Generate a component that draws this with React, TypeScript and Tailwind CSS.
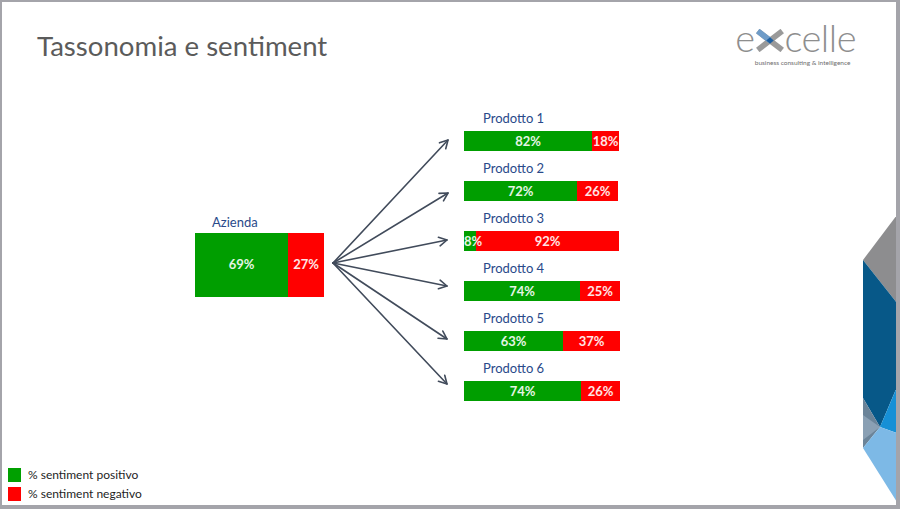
import React from 'react';

// Data for the product bars (widths measured from the slide)
const products = [
  { name: 'Prodotto 1', pos: '82%', neg: '18%', gw: 128, rw: 27, narrow: false },
  { name: 'Prodotto 2', pos: '72%', neg: '26%', gw: 113, rw: 41, narrow: false },
  { name: 'Prodotto 3', pos: '8%', neg: '92%', gw: 12, rw: 143, narrow: true },
  { name: 'Prodotto 4', pos: '74%', neg: '25%', gw: 116, rw: 40, narrow: false },
  { name: 'Prodotto 5', pos: '63%', neg: '37%', gw: 99, rw: 57, narrow: false },
  { name: 'Prodotto 6', pos: '74%', neg: '26%', gw: 117, rw: 39, narrow: false },
];

const origin = { x: 9, y: 153 };
const tips = [
  { x: 124, y: 30 },
  { x: 124, y: 83 },
  { x: 123, y: 130 },
  { x: 123, y: 176 },
  { x: 123, y: 229 },
  { x: 123, y: 274 },
];

const headPoints = (x1: number, y1: number, x2: number, y2: number) => {
  const a = Math.atan2(y2 - y1, x2 - x1);
  const len = 9;
  const s = 0.5;
  const p1 = `${x2 - len * Math.cos(a - s)},${y2 - len * Math.sin(a - s)}`;
  const p2 = `${x2 - len * Math.cos(a + s)},${y2 - len * Math.sin(a + s)}`;
  return `${p1} ${x2},${y2} ${p2}`;
};

const Arrows: React.FC = () => (
  <svg width={140} height={290} className="shrink-0" viewBox="0 0 140 290">
    {tips.map((t, i) => (
      <g key={i} stroke="#414b5b" strokeWidth={1.6} fill="none" strokeLinecap="round" strokeLinejoin="round">
        <line x1={origin.x} y1={origin.y} x2={t.x} y2={t.y} />
        <polyline points={headPoints(origin.x, origin.y, t.x, t.y)} />
      </g>
    ))}
  </svg>
);

const Logo: React.FC = () => (
  <div className="mt-[15px] mr-[40px] flex flex-col items-center">
    <div className="flex items-end h-[40px] text-[38px] leading-[40px] tracking-[-0.5px] font-light text-[#8e8e8e]">
      <span>e</span>
      <svg width={32} height={23} viewBox="0 0 34 24" className="mb-[5px] mx-[-1px]">
        <line x1={4} y1={22} x2={30} y2={2} stroke="#9a9a9a" strokeWidth={6} />
        <line x1={4} y1={2} x2={30} y2={22} stroke="#9a9a9a" strokeWidth={6} />
        <line x1={4} y1={2} x2={17} y2={12} stroke="#6f9cc8" strokeWidth={6} />
        <polygon points="13,12 17,8.5 21,12 17,15.5" fill="#1f5f9f" />
      </svg>
      <span>celle</span>
    </div>
    <div className="mt-[2px] text-[6.5px] leading-[7px] text-[#6e6e6e] ml-[14px]">business consulting &amp; intelligence</div>
  </div>
);

const Decoration: React.FC = () => (
  <svg width={34} height={295} viewBox="0 0 34 295" className="absolute right-0 top-[208px]">
    <polygon points="35,5 1,50 35,93" fill="#8d8d8f" />
    <polygon points="1,50 35,93 35,177 18,217 1,188" fill="#075888" />
    <polygon points="35,177 18,217 35,223" fill="#1690d6" />
    <polygon points="1,188 18,217 1,238" fill="#6b8499" />
    <polygon points="1,205 18,217 1,230" fill="#8aa0b4" />
    <polygon points="1,238 18,217 35,223 35,292" fill="#7db9e6" />
  </svg>
);

export default function App() {
  return (
    <div className="w-[900px] h-[509px] bg-[#a4a4aa] pt-[2px] pl-[2px] pr-[4px] pb-[4px]">
      <div className="relative w-full h-full bg-white flex flex-col overflow-hidden font-['Lato','Open_Sans',sans-serif]">
        <div className="h-[80px] shrink-0 flex justify-between items-start">
          <h1 className="ml-[35px] mt-[28px] text-[27.6px] leading-[32px] text-[#5b5b5b]">Tassonomia e sentiment</h1>
          <Logo />
        </div>

        <div className="flex items-start pl-[193px] mt-[28px]">
          <div className="w-[129px] mt-[104px] shrink-0">
            <div className="pl-[17px] text-[13px] leading-[16px] text-[#29498a]">Azienda</div>
            <div className="mt-[3px] h-[64px] flex text-[13px] font-bold text-white/90">
              <div className="w-[93px] bg-[#009e00] flex items-center justify-center">69%</div>
              <div className="w-[36px] bg-[#ff0000] flex items-center justify-center">27%</div>
            </div>
          </div>

          <Arrows />

          <div className="w-[157px] flex flex-col gap-[9px]">
            {products.map((p) => (
              <div key={p.name}>
                <div className="pl-[19px] text-[13px] leading-[16px] text-[#29498a]">{p.name}</div>
                <div className="mt-[5px] h-[20px] flex text-[13px] leading-[20px] font-bold text-white/90">
                  <div
                    className={
                      p.narrow
                        ? 'relative z-10 bg-[#009e00] flex justify-start whitespace-nowrap'
                        : 'relative z-10 bg-[#009e00] flex justify-center whitespace-nowrap'
                    }
                    style={{ width: p.gw }}
                  >
                    {p.pos}
                  </div>
                  <div className="bg-[#ff0000] flex justify-center whitespace-nowrap" style={{ width: p.rw }}>
                    {p.neg}
                  </div>
                </div>
              </div>
            ))}
          </div>
        </div>

        <div className="mt-auto pl-[6px] pb-[4px] flex flex-col gap-[5px]">
          <div className="flex items-center gap-[7px]">
            <div className="w-[13px] h-[14px] bg-[#00a000]" />
            <span className="text-[12px] leading-[14px] text-[#1e1e1e]">% sentiment positivo</span>
          </div>
          <div className="flex items-center gap-[7px]">
            <div className="w-[13px] h-[14px] bg-[#ff0000]" />
            <span className="text-[12px] leading-[14px] text-[#1e1e1e]">% sentiment negativo</span>
          </div>
        </div>

        <Decoration />
      </div>
    </div>
  );
}
